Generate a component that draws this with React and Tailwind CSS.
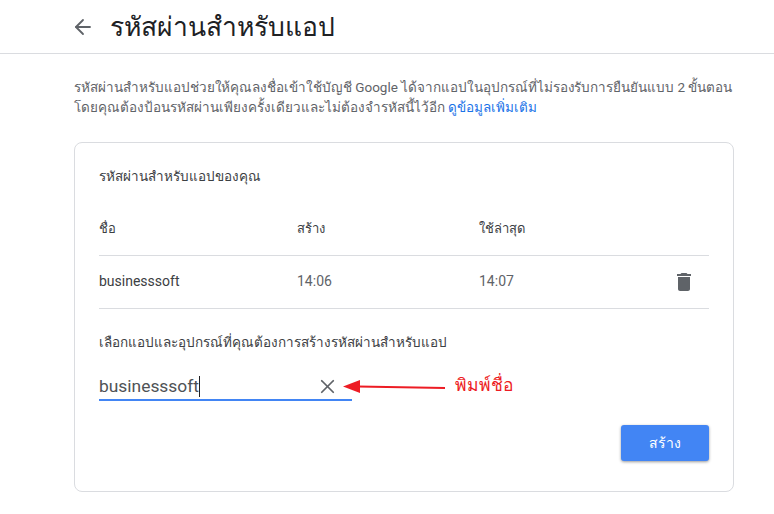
import { ArrowLeft, X } from "lucide-react";

const font = "font-['Roboto','Noto_Sans','Liberation_Sans',sans-serif]";

export default function App() {
  return (
    <div className={`h-[514px] w-[774px] overflow-hidden bg-white ${font}`}>
      {/* Header */}
      <header className="flex h-[54px] items-center border-b border-[#dadce0] pl-[71px]">
        <ArrowLeft className="h-6 w-6 text-[#5f6368]" strokeWidth={1.8} />
        <h1 className="ml-[15px] text-[26.5px] leading-9 text-[#202124]">รหัสผ่านสำหรับแอป</h1>
      </header>

      <div className="px-[74px] pt-[23px]">
        {/* Intro */}
        <p className="w-[670px] text-[13.5px] leading-5 whitespace-nowrap text-[#5f6368]">
          <span className="tracking-[-0.03px]">รหัสผ่านสำหรับแอปช่วยให้คุณลงชื่อเข้าใช้บัญชี Google ได้จากแอปในอุปกรณ์ที่ไม่รองรับการยืนยันแบบ 2 ขั้นตอน</span>
          <br />
          โดยคุณต้องป้อนรหัสผ่านเพียงครั้งเดียวและไม่ต้องจำรหัสนี้ไว้อีก{" "}
          <a className="text-[#1a73e8]">ดูข้อมูลเพิ่มเติม</a>
        </p>

        {/* Card */}
        <section className="mt-[25px] h-[350px] w-[660px] rounded-lg border border-[#dadce0] px-6 pt-[23px]">
          <h2 className="text-[13.5px] leading-5 text-[#3c4043]">รหัสผ่านสำหรับแอปของคุณ</h2>

          <div className="mt-[26px] grid h-[44px] grid-cols-[198px_182px_1fr] items-center border-b border-[#dadce0] pb-[10px] text-[13px] text-[#3c4043]">
            <span>ชื่อ</span>
            <span>สร้าง</span>
            <span>ใช้ล่าสุด</span>
          </div>

          <div className="grid h-[53px] grid-cols-[198px_182px_1fr_24px] items-center border-b border-[#dadce0] pb-[2px] text-sm text-[#5f6368]">
            <span className="text-[#3c4043]">businesssoft</span>
            <span>14:06</span>
            <span>14:07</span>
            <svg viewBox="0 0 24 24" className="mt-[2px] -ml-[13px] h-6 w-6 fill-[#5f6368]">
              <path d="M6 19c0 1.1.9 2 2 2h8c1.1 0 2-.9 2-2V7H6v12zM19 4h-3.5l-1-1h-5l-1 1H5v2h14V4z" />
            </svg>
          </div>

          <p className="mt-[23px] text-[13.5px] leading-5 text-[#3c4043]">เลือกแอปและอุปกรณ์ที่คุณต้องการสร้างรหัสผ่านสำหรับแอป</p>

          {/* Input with the red note next to it */}
          <div className="mt-5 flex items-start">
            <div className="flex h-[29px] w-[253px] items-center justify-between border-b-2 border-[#4285f4] pt-[2px] pr-[13px]">
              <span className="flex items-center text-[17.4px] text-[#4f5256]">
                businesssoft
                <span className="h-[21px] w-px bg-[#202124]" />
              </span>
              <X className="h-[23px] w-[23px] text-[#5f6368]" strokeWidth={1.8} />
            </div>
            <svg viewBox="0 0 102 14" className="mt-[8px] -ml-[9px] h-[14px] w-[102px]">
              <path d="M0 6.5 L17 0 L17 13 Z" fill="#ed1c24" />
              <path d="M15 6.5 L102 8" stroke="#ed1c24" strokeWidth="2" fill="none" />
            </svg>
            <span className="mt-[1px] ml-[10px] text-[17.5px] leading-6 font-medium text-[#ed1c24]">พิมพ์ชื่อ</span>
          </div>

          <div className="mt-[24px] flex justify-end">
            <button className="h-9 w-[88px] rounded-[3px] bg-[#4285f4] text-sm font-medium text-white shadow-[0_1px_3px_rgba(0,0,0,0.4)]">
              สร้าง
            </button>
          </div>
        </section>
      </div>
    </div>
  );
}
